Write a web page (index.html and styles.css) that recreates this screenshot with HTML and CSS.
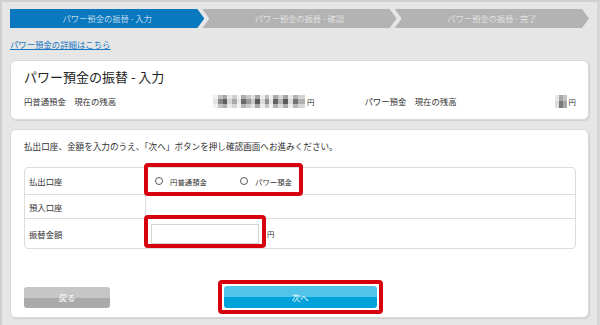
FILE: index.html
```html
<!DOCTYPE html>
<html lang="ja">
<head>
<meta charset="utf-8">
<title>パワー預金の振替 - 入力</title>
<link rel="stylesheet" href="styles.css">
</head>
<body>
<div class="page">
  <div class="steps">
    <div class="step step-first step-active">パワー預金の振替 - 入力</div>
    <div class="step">パワー預金の振替 - 確認</div>
    <div class="step">パワー預金の振替 - 完了</div>
  </div>
  <a class="detail-link" href="#">パワー預金の詳細はこちら</a>

  <section class="card card-summary">
    <h1 class="title">パワー預金の振替 - 入力</h1>
    <div class="balances">
      <span class="bal-label">円普通預金　現在の残高</span>
      <span class="mosaic mosaic-wide"></span><span class="yen">円</span>
      <span class="bal-label bal-label-2">パワー預金　現在の残高</span>
      <span class="mosaic mosaic-small"></span><span class="yen">円</span>
    </div>
  </section>

  <section class="card card-form">
    <p class="lead">払出口座、金額を入力のうえ、「次へ」ボタンを押し確認画面へお進みください。</p>
    <div class="form-table">
      <div class="row row-1">
        <div class="th">払出口座</div>
        <div class="td">
          <label class="radio-opt radio-opt-1"><span class="radio"></span>円普通預金</label>
          <label class="radio-opt"><span class="radio"></span>パワー預金</label>
          <span class="mark mark-radio"></span>
        </div>
      </div>
      <div class="row row-2">
        <div class="th">預入口座</div>
        <div class="td"></div>
      </div>
      <div class="row row-3">
        <div class="th">振替金額</div>
        <div class="td">
          <span class="amount-input"></span><span class="unit">円</span>
          <span class="mark mark-input"></span>
        </div>
      </div>
    </div>
    <div class="actions">
      <button class="btn btn-back" type="button">戻る</button>
      <span class="next-frame"><button class="btn btn-next" type="button">次へ</button></span>
    </div>
  </section>
</div>
</body>
</html>
```
FILE: styles.css
```css
* { box-sizing: border-box; }
html, body { margin: 0; padding: 0; }
body {
  width: 600px;
  height: 325px;
  overflow: hidden;
  background: #e6e6e6;
  font-family: "Noto Sans CJK JP", "Noto Sans", sans-serif;
  color: #333;
}
.page {
  width: 600px;
  height: 325px;
  padding: 9px 11px 0 10px;
  box-shadow: inset 2px 2px 0 #cfcfcf, inset -3px 0 0 #d6d6d6;
}
.steps {
  display: flex;
  height: 19px;
}
.step {
  flex: 1;
  margin-left: -2px;
  background: #b3b3b3;
  color: #f4f4f4;
  font-size: 8.3px;
  font-weight: 300;
  line-height: 19px;
  text-align: center;
  clip-path: polygon(0 0, calc(100% - 7px) 0, 100% 50%, calc(100% - 7px) 100%, 0 100%, 7px 50%);
}
.step-first {
  margin-left: 0;
  clip-path: polygon(0 0, calc(100% - 7px) 0, 100% 50%, calc(100% - 7px) 100%, 0 100%);
}
.step-active {
  background: #0a78bf;
  color: #fff;
}
.detail-link {
  display: block;
  width: max-content;
  margin-top: 10px;
  font-size: 8.4px;
  line-height: 12px;
  color: #1a78c2;
  text-decoration: underline;
}
.card {
  background: #fff;
  border: 1px solid #dadada;
  border-radius: 6px;
  box-shadow: 1px 1px 1px #cfcfcf;
}
.card-summary {
  margin-top: 10px;
  padding: 8px 12px 11px 13px;
}
.title {
  margin: 0;
  font-size: 13px;
  font-weight: normal;
  line-height: 16px;
  color: #222;
}
.balances {
  display: flex;
  align-items: center;
  margin-top: 9px;
  height: 14px;
  font-size: 8.4px;
}
.bal-label { width: 189px; white-space: nowrap; }
.bal-label-2 { flex: 1; width: auto; margin-left: 50px; }
.yen { font-size: 7.4px; margin-left: 2px; }
.mosaic { display: inline-block; height: 13px; }
.mosaic-wide {
  width: 92px;
  background:
    linear-gradient(180deg, rgba(255,255,255,0.45) 0 4px, rgba(255,255,255,0) 4px 9px, rgba(255,255,255,0.5) 9px 13px),
    linear-gradient(90deg, #e4e4e4 0 5px, #8a8a8a 5px 10px, #5e5e5e 10px 14px, #d6d6d6 14px 19px, #a9a9a9 19px 24px, #e8e8e8 24px 28px, #6a6a6a 28px 33px, #9a9a9a 33px 38px, #c9c9c9 38px 42px, #5a5a5a 42px 47px, #dadada 47px 52px, #8d8d8d 52px 56px, #e6e6e6 56px 60px, #646464 60px 65px, #b6b6b6 65px 70px, #5a5a5a 70px 75px, #dadada 75px 80px, #727272 80px 85px, #b0b0b0 85px 92px);
}
.mosaic-small {
  width: 12px;
  background:
    linear-gradient(180deg, rgba(255,255,255,0.35) 0 6px, rgba(0,0,0,0) 6px 13px),
    linear-gradient(90deg, #dcdcdc 0 4px, #7a7a7a 4px 8px, #a5a5a5 8px 12px);
}
.card-form {
  margin-top: 9px;
  padding: 9px 12px 3px 13px;
}
.lead {
  margin: 0;
  font-size: 8.6px;
  line-height: 14px;
}
.form-table {
  margin-top: 14px;
  border: 1px solid #dcdcdc;
  border-radius: 4px;
}
.row {
  display: grid;
  grid-template-columns: 121px 1fr;
  border-bottom: 1px solid #dcdcdc;
}
.row:last-child { border-bottom: 0; }
.row-1 { height: 27px; }
.row-2 { height: 24px; }
.row-3 { height: 29px; }
.th {
  display: flex;
  align-items: center;
  padding-left: 4px;
  border-right: 1px solid #dcdcdc;
  font-size: 8.4px;
}
.td {
  position: relative;
  display: flex;
  align-items: center;
  font-size: 7.4px;
}
.row-1 .td { padding-left: 9px; }
.radio-opt {
  display: inline-flex;
  align-items: center;
  gap: 7px;
  white-space: nowrap;
}
.radio-opt-1 { width: 85px; }
.radio {
  width: 8px;
  height: 8px;
  border: 1px solid #5a5a5a;
  border-radius: 50%;
  background: #fff;
}
.row-3 .td { padding-left: 5px; }
.amount-input {
  width: 108px;
  height: 20px;
  border: 1px solid #d4d4d4;
  background: #fff;
}
.unit { margin-left: 8px; }
.mark {
  position: absolute;
  border: 4px solid #d7000f;
  border-radius: 4px;
  pointer-events: none;
}
.mark-radio { left: -2px; top: -5px; width: 159px; height: 33px; }
.mark-input { left: -2px; top: -4px; width: 122px; height: 33px; }
.actions {
  display: grid;
  grid-template-columns: 1fr auto 1fr;
  align-items: center;
  margin-top: 31px;
}
.btn {
  border: 0;
  padding: 0;
  font-family: inherit;
  font-size: 8.4px;
  color: #fff;
  border-radius: 3px;
  height: 22px;
}
.btn-back {
  justify-self: start;
  width: 86px;
  height: 21px;
  background: linear-gradient(180deg, #c6c6c6 0 50%, #aaaaaa 50% 100%);
}
.next-frame {
  display: block;
  border: 4px solid #d7000f;
  border-radius: 4px;
  padding: 2px;
  background: #fff;
}
.btn-next {
  display: block;
  width: 153px;
  background: linear-gradient(180deg, #52c3e9 0 50%, #00a2d9 50% 100%);
}
```
